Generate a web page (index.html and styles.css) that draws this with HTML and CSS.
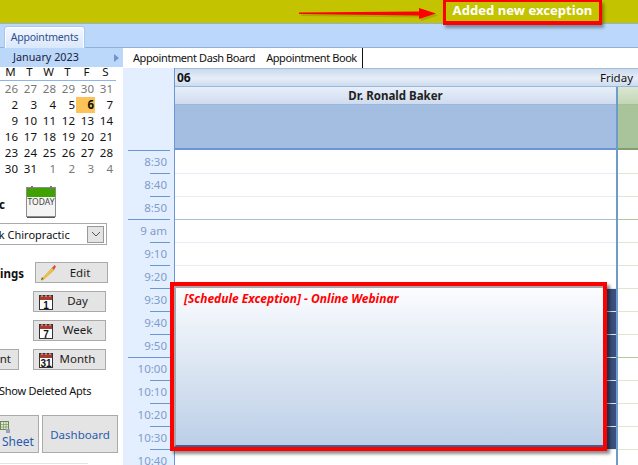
FILE: index.html
```html
<!DOCTYPE html>
<html lang="en">
<head>
<meta charset="utf-8">
<title>Appointments</title>
<link rel="stylesheet" href="styles.css">
</head>
<body>
<header class="topbar"></header>
<nav class="tabbar"><div class="tab">Appointments</div></nav>
<div class="app">
  <aside class="side">
    <div class="cal-head"><span class="cal-title">January 2023</span><span class="cal-next"></span></div>
    <div class="cal-week"><span>M</span><span>T</span><span>W</span><span>T</span><span>F</span><span>S</span></div>
    <div class="cal-grid">
      <span class="dim">26</span><span class="dim">27</span><span class="dim">28</span><span class="dim">29</span><span class="dim">30</span><span class="dim">31</span>
      <span>2</span><span>3</span><span>4</span><span>5</span><span class="today">6</span><span>7</span>
      <span>9</span><span>10</span><span>11</span><span>12</span><span>13</span><span>14</span>
      <span>16</span><span>17</span><span>18</span><span>19</span><span>20</span><span>21</span>
      <span>23</span><span>24</span><span>25</span><span>26</span><span>27</span><span>28</span>
      <span>30</span><span>31</span><span class="dim">1</span><span class="dim">2</span><span class="dim">3</span><span class="dim">4</span>
    </div>
    <div class="clinic-row">
      <b class="cut-label">Clinic</b>
      <div class="today-icon">
        <svg width="30" height="32" viewBox="0 0 30 32"><rect x="0.5" y="1.5" width="29" height="29" fill="#f4f4f4" stroke="#8c8c8c"/><rect x="1" y="2" width="28" height="9" fill="#3fa200"/><rect x="5" y="0" width="2" height="4" fill="#777"/><rect x="24" y="0" width="2" height="4" fill="#777"/><text x="15" y="19" text-anchor="middle" class="today-text">TODAY</text><path d="M1 31.500H29" stroke="#555"/></svg>
      </div>
    </div>
    <div class="select"><span class="select-text">Brook Chiropractic</span><span class="select-btn"><svg width="10" height="6" viewBox="0 0 10 6"><path d="M1 1l4 4 4-4" fill="none" stroke="#555"/></svg></span></div>
    <div class="edit-row">
      <b class="cut-label2">Settings</b>
      <button class="btn edit"><svg width="17" height="17" viewBox="0 0 17 17"><path d="M1 16L12 4l2 2L3 16z" fill="#f2c23e" stroke="#c99a20" stroke-width=".5"/><path d="M1 16l1-3 1.500 2z" fill="#7a5a20"/><path d="M12 4l2.500-3 1.500 1.500-2 3.500z" fill="#d8503a"/></svg><span>Edit</span></button>
    </div>
    <button class="btn view">
      <svg width="14" height="16" viewBox="0 0 14 16"><rect x=".5" y="1.500" width="13" height="14" fill="#fff" stroke="#333"/><rect x="1" y="2" width="12" height="4" fill="#a83a30"/><path d="M3 1v2M7 1v2M11 1v2" stroke="#e8c8c0"/><text x="7" y="15" text-anchor="middle" class="cal-num">1</text></svg><span>Day</span>
    </button>
    <button class="btn view">
      <svg width="14" height="16" viewBox="0 0 14 16"><rect x=".5" y="1.500" width="13" height="14" fill="#fff" stroke="#333"/><rect x="1" y="2" width="12" height="4" fill="#a83a30"/><path d="M3 1v2M7 1v2M11 1v2" stroke="#e8c8c0"/><text x="7" y="15" text-anchor="middle" class="cal-num">7</text></svg><span>Week</span>
    </button>
    <div class="month-row">
      <button class="btn appt"><span class="cut-btn">Appoint</span></button>
      <button class="btn view flat">
        <svg width="14" height="16" viewBox="0 0 14 16"><rect x=".5" y="1.500" width="13" height="14" fill="#fff" stroke="#333"/><rect x="1" y="2" width="12" height="4" fill="#a83a30"/><path d="M3 1v2M7 1v2M11 1v2" stroke="#e8c8c0"/><text x="7" y="15" text-anchor="middle" class="cal-num">31</text></svg><span>Month</span>
      </button>
    </div>
    <div class="deleted"><span class="deleted-text">Show Deleted Apts</span></div>
    <div class="big-row">
      <button class="btn big sheet">
        <svg width="11" height="13" viewBox="0 0 11 13"><rect x=".5" y=".5" width="8" height="8" fill="#dfe9d2" stroke="#6d8a55"/><path d="M.5 3.500h8M.5 6h8M3.500.5v8M6 .5v8" stroke="#6d8a55" stroke-width=".6"/><rect x="6" y="8" width="4" height="4" fill="#9aa4b5"/></svg>
        <span>Sheet</span>
      </button>
      <button class="btn big dash">Dashboard</button>
    </div>
    <div class="side-foot"></div>
  </aside>

  <main class="main">
    <div class="subtabs"><span class="subtab">Appointment Dash Board</span><span class="subtab current">Appointment Book</span></div>
    <div class="sched">
      <div class="gutter">
        <div class="gutter-top"></div>
        <div class="slot"><span>8:30</span></div>
        <div class="slot"><span>8:40</span></div>
        <div class="slot"><span>8:50</span></div>
        <div class="slot hour"><span>9 am</span></div>
        <div class="slot"><span>9:10</span></div>
        <div class="slot"><span>9:20</span></div>
        <div class="slot"><span>9:30</span></div>
        <div class="slot"><span>9:40</span></div>
        <div class="slot"><span>9:50</span></div>
        <div class="slot hour"><span>10:00</span></div>
        <div class="slot"><span>10:10</span></div>
        <div class="slot"><span>10:20</span></div>
        <div class="slot"><span>10:30</span></div>
        <div class="slot"><span>10:40</span></div>
      </div>
      <div class="board">
        <div class="day-head"><b>06</b><span>Friday</span></div>
        <div class="cols">
          <section class="col doctor">
            <div class="res-head">Dr. Ronald Baker</div>
            <div class="allday"></div>
            <div class="cell"></div><div class="cell"></div><div class="cell"></div><div class="cell hr"></div><div class="cell"></div><div class="cell"></div><div class="cell"></div><div class="cell"></div><div class="cell"></div><div class="cell hr"></div><div class="cell"></div><div class="cell"></div><div class="cell"></div><div class="cell"></div>
          </section>
          <section class="col other">
            <div class="res-head"></div>
            <div class="allday"></div>
            <div class="cell"></div><div class="cell"></div><div class="cell"></div><div class="cell hr"></div><div class="cell"></div><div class="cell"></div><div class="cell"></div><div class="cell"></div><div class="cell"></div><div class="cell hr"></div><div class="cell"></div><div class="cell"></div><div class="cell"></div><div class="cell"></div>
          </section>
        </div>
      </div>
    </div>
  </main>
</div>

<div class="under-stripe"></div>
<div class="exception"><div class="exception-in">[Schedule Exception] - Online Webinar</div></div>
<svg class="arrow" width="144" height="18" viewBox="0 0 144 18"><path d="M0 7.500L120 6.500V3L137 8.500 120 14V10.500L0 9z" fill="#6f6f00" transform="translate(2 2)" opacity=".3"/><path d="M0 7.500L120 6.500V3L137 8.500 120 14V10.500L0 9z" fill="#f00"/></svg>
<div class="notice">Added new exception</div>
</body>
</html>
```
FILE: styles.css
```css
* { box-sizing: border-box; }
html, body { margin: 0; height: 465px; overflow: hidden; }
body { font: 12px "Noto Sans", sans-serif; color: #111; background: #fff; position: relative; }

.topbar { height: 24px; background: #c3c300; border-bottom: 1px solid #8fb0d8; }
.tabbar { height: 24px; background: #bbd8fb; border-bottom: 1px solid #8fb0d8; padding: 3px 0 0 5px; }
.tab { width: 79px; height: 21px; background: linear-gradient(#f2f7fe, #d9e8fc); border: 1px solid #fff; border-bottom: 0; border-radius: 3px 3px 0 0; color: #2f4f8f; text-align: center; line-height: 19px; font-size: 10.500px; letter-spacing: -.2px; box-shadow: 0 0 0 1px #a9c6ec; }

.app { display: flex; height: 417px; }
.side { width: 123px; flex: none; overflow: hidden; font-size: 12px; }
.cal-head { height: 19px; background: #bbd8fb; display: flex; align-items: center; padding: 0 0 2px 13px; position: relative; }
.cal-title { font-size: 10.800px; color: #1b1b3a; flex: 1; }
.cal-next { width: 0; height: 0; border: 4px solid transparent; border-left: 5px solid #6e94c8; margin-top: 2px; }
.cal-week { height: 14px; display: grid; grid-template-columns: repeat(6, 19px); border-bottom: 1px solid #8db4ec; font-size: 11.500px; text-align: center; line-height: 10px; margin-right: 7px; padding-left: 1px; }
.cal-grid { display: grid; grid-template-columns: repeat(6, 19px); grid-auto-rows: 16px; font-size: 11.500px; line-height: 16px; text-align: right; }
.cal-grid span { padding-right: 1px; }
.dim { color: #777; }
.today { background: #fcc458; font-weight: 700; }

.clinic-row { display: flex; align-items: center; height: 33px; margin-top: 8px; }
.cut-label { margin-left: -32px; width: 37px; text-align: right; font-size: 11.500px; margin-top: 5px; }
.today-icon { margin-left: 21px; height: 32px; display: flex; }
.today-text { font: 8.500px "Noto Sans", sans-serif; fill: #444; }
.cal-num { font: 700 10px "Liberation Sans", sans-serif; fill: #111; }

.select { width: 107px; height: 22px; margin-top: 5px; border: 1px solid #aaa; border-left: 0; background: #fff; display: flex; align-items: center; justify-content: space-between; overflow: hidden; padding-right: 1px; }
.select-text { margin-left: -26px; white-space: nowrap; font-size: 11px; }
.select-btn { width: 17px; height: 17px; background: #e4e4e4; border: 1px solid #999; display: flex; align-items: center; justify-content: center; flex: none; margin-right: 1px; }

.btn { font: 11.500px "Noto Sans", sans-serif; background: #e4e4e4; border: 1px solid #aaa; padding: 0; color: #1c1c1c; display: flex; align-items: center; }
.edit-row { display: flex; align-items: center; margin-top: 17px; height: 21px; justify-content: flex-end; padding-right: 15px; gap: 11px; }
.cut-label2 { white-space: nowrap; font-size: 11.500px; margin-top: 1px; }
.edit { width: 73px; height: 21px; flex: none; padding-left: 4px; }
.edit span { flex: 1; text-align: center; padding-right: 4px; }
.view { width: 73px; height: 21px; margin: 8px 0 0 33px; padding-left: 5px; }
.view span { flex: 1; text-align: center; padding: 0 3px 2px 0; }
.month-row { display: flex; margin-top: 8px; height: 21px; gap: 14px; }
.flat { margin: 0; flex: none; }
.appt { width: 19px; height: 21px; border-left: 0; overflow: hidden; justify-content: flex-end; flex: none; }
.cut-btn { white-space: nowrap; padding: 0 7px 2px 0; }

.deleted { margin-top: 13px; height: 16px; line-height: 16px; white-space: nowrap; font-size: 11px; letter-spacing: -.27px; }
.deleted-text { margin-left: -1px; display: inline-block; }
.big-row { display: flex; gap: 3px; margin-top: 16px; height: 38px; }
.big { height: 38px; color: #2a5cae; font-size: 12px; justify-content: center; }
.sheet { width: 39px; border-left: 0; flex-direction: column; align-items: flex-start; padding: 3px 0 0 2px; line-height: 16px; flex: none; }
.sheet svg { margin-left: -2px; }
.dash { width: 76px; flex: none; font-size: 11.500px; }
.side-foot { width: 88px; height: 1px; background: #e4e4e4; margin-top: 10px; }

.main { flex: 1; min-width: 0; display: flex; flex-direction: column; }
.subtabs { height: 20px; background: #fff; display: flex; padding-left: 6px; flex: none; }
.subtab { padding: 0 4px; font-size: 11px; letter-spacing: -.41px; line-height: 20px; white-space: nowrap; margin-right: 3px; color: #111; }
.current { border-right: 1px solid #111; padding-right: 5px; margin-left: 0; }

.sched { flex: 1; display: flex; min-height: 0; overflow: hidden; }
.gutter { width: 51px; flex: none; background: #e3effe; }
.gutter-top { height: 82px; }
.slot { height: 23px; position: relative; text-align: right; color: #7f9ccb; font-size: 11.500px; padding: 4px 7px 0 0; line-height: 16px; }
.slot::before { content: ""; position: absolute; top: 0; right: 4px; height: 1px; width: 20px; background: #6a96d8; }
.slot:nth-child(2)::before, .hour::before { width: 42px; }

.board { flex: 1; min-width: 0; display: flex; flex-direction: column; border-left: 1px solid #6a96d8; }
.day-head { height: 19px; flex: none; display: flex; justify-content: space-between; align-items: center; padding: 0 5px 0 2px; background: linear-gradient(#cad9ed, #e6eef8 55%, #cddbee); border-bottom: 1px solid #9cb7dc; border-top: 1px solid #a5bcdc; }
.day-head b { font-size: 12px; }
.day-head span { font-size: 11.500px; }
.cols { flex: 1; display: flex; min-height: 0; }
.col { min-width: 0; }
.doctor { width: 441px; flex: none; }
.other { flex: 1; border-left: 2px solid #6f9bc9; }
.res-head { height: 18px; text-align: center; font-weight: 700; font-size: 11.500px; line-height: 17px; background: linear-gradient(#e8eff9, #cfdcee); border-bottom: 1px solid #9cb7dc; color: #222; }
.allday { height: 45px; background: #a3bee0; border-bottom: 2px solid #6a96d8; }
.cell { height: 23px; background: #fff; border-top: 1px solid #e8ecf5; }
.cell:nth-child(3) { border-top: 0; }
.hr { border-top-color: #a9bfdc; }
.other .res-head { background: linear-gradient(#dbe7d2, #c2d6b5); border-bottom-color: #a8bf9a; }
.other .allday { background: #a9c49a; border-bottom-color: #7f9f70; }
.other .cell { border-top-color: #dde8cf; }
.other .hr { border-top-color: #b2c6a0; }

.under-stripe { position: absolute; left: 603px; top: 289px; width: 13px; height: 160px; background: repeating-linear-gradient(#3a4f7d 0 21.800px, #dfe6f0 21.800px 23px); }
.exception { position: absolute; left: 170px; top: 282px; width: 437px; height: 169px; border: 4px solid #f00; box-shadow: 3px 3px 3px rgba(0,0,0,.45); }
.exception-in { height: 100%; padding: 4px 0 0 8px; background: linear-gradient(#fbfcfe, #bccfe7); border-top: 2px solid #a6a8ac; border-left: 2px solid #a6a8ac; border-bottom: 2px solid #3f5e92; color: #f00; font: italic 700 12px/14px "Noto Sans", sans-serif; }
.arrow { position: absolute; left: 299px; top: 5px; }
.notice { position: absolute; left: 443px; top: 0; width: 159px; height: 25px; border: 3px solid #f00; border-top-width: 2px; border-bottom-width: 4px; color: #fff; font: 700 13.100px/17px "Noto Sans", sans-serif; text-align: center; box-shadow: 2px 3px 3px rgba(0,0,0,.35); white-space: nowrap; }
```
